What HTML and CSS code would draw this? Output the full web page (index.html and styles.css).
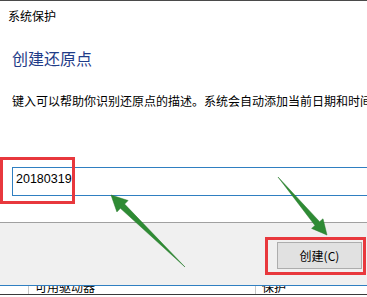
FILE: index.html
```html
<!DOCTYPE html>
<html lang="zh-CN">
<head>
    <meta charset="UTF-8">
    <meta name="viewport" content="width=device-width, initial-scale=1.0">
    <title>系统保护</title>
    <link rel="stylesheet" href="styles.css">
</head>
<body>
    <div class="window">
        <div class="titlebar">系统保护</div>
        <div class="content">
            <h1 class="main-title">创建还原点</h1>
            <p class="desc">键入可以帮助你识别还原点的描述。系统会自动添加当前日期和时间。</p>
            <div class="field">20180319<span class="caret"></span></div>
        </div>
        <div class="footer">
            <button class="btn">创建(C)</button>
        </div>
        <div class="table-row">
            <div class="cell cell-first"></div>
            <div class="cell cell-name"><span>可用驱动器</span></div>
            <div class="cell cell-state"><span>保护</span></div>
        </div>

        <!-- annotations -->
        <div class="mark mark-input"></div>
        <div class="mark mark-button"></div>
        <svg class="arrows" width="367" height="297" viewBox="0 0 367 297">
            <polygon points="111,195 128.1,200.5 124.6,204.1 185,267 120.4,208.3 116.9,211.9" />
            <polygon points="327,235 311.6,228.4 315,225.5 278,177 319.6,221.7 323,218.8" />
        </svg>
    </div>
</body>
</html>
```

FILE: styles.css
```css
body {
    margin: 0;
    padding: 0;
    background-color: white;
    font-family: "Noto Sans CJK SC", "Liberation Sans", sans-serif;
    color: black;
}

.window {
    position: relative;
    width: 367px;
    height: 297px;
    overflow: hidden;
    background-color: white;
}

.titlebar {
    height: 30px;
    line-height: 30px;
    padding-left: 8px;
    border-top: 1px solid #4a4a4a;
    font-size: 12px;
}

.content {
    padding: 0 0 0 12px;
}

.main-title {
    margin: 16px 0 0;
    font-size: 16px;
    font-weight: normal;
    line-height: 22px;
    color: #1f3c88;
}

.desc {
    margin: 24px 0 0;
    font-size: 12px;
    line-height: 16px;
    white-space: nowrap;
}

.field {
    margin-top: 58px;
    width: 400px;
    height: 24px;
    padding: 3px 0 0 3px;
    border: 1px solid #2f7fc1;
    font-family: "Liberation Sans", sans-serif;
    font-size: 12.5px;
    line-height: 16px;
}

.caret {
    display: inline-block;
    width: 1px;
    height: 13px;
    margin-left: 1px;
    vertical-align: -2px;
    background-color: black;
}

.footer {
    margin-top: 26px;
    height: 62px;
    border-top: 1px solid #a0a0a0;
    background-color: #f0f0f0;
    display: flex;
    justify-content: flex-end;
    align-items: flex-start;
    padding-right: 5px;
}

.btn {
    margin-top: 19px;
    width: 85px;
    height: 27px;
    padding: 0;
    border: 1px solid #adadad;
    background-color: #e1e1e1;
    font-family: "Noto Sans CJK SC", "Liberation Sans", sans-serif;
    font-size: 12px;
    color: black;
}

.table-row {
    display: flex;
    height: 8px;
    border-top: 1px solid #2f7fc1;
    border-bottom: 1px solid #3a3a3a;
}

.cell {
    overflow: hidden;
    font-size: 12px;
    line-height: 12px;
}

.cell span {
    display: block;
    margin-top: -5px;
    padding-left: 6px;
}

.cell-first {
    width: 28px;
    border-right: 1px solid #c8c8c8;
}

.cell-name {
    width: 226px;
    border-right: 1px solid #c8c8c8;
}

.cell-state {
    flex: 1;
}

.mark {
    position: absolute;
    border: 3px solid #e8383d;
    box-sizing: border-box;
}

.mark-input {
    left: 0;
    top: 157px;
    width: 75px;
    height: 47px;
}

.mark-button {
    left: 265px;
    top: 237px;
    width: 101px;
    height: 38px;
}

.arrows {
    position: absolute;
    left: 0;
    top: 0;
}

.arrows polygon {
    fill: #2e8b34;
    stroke: #26782b;
    stroke-width: 0.5;
}
```
